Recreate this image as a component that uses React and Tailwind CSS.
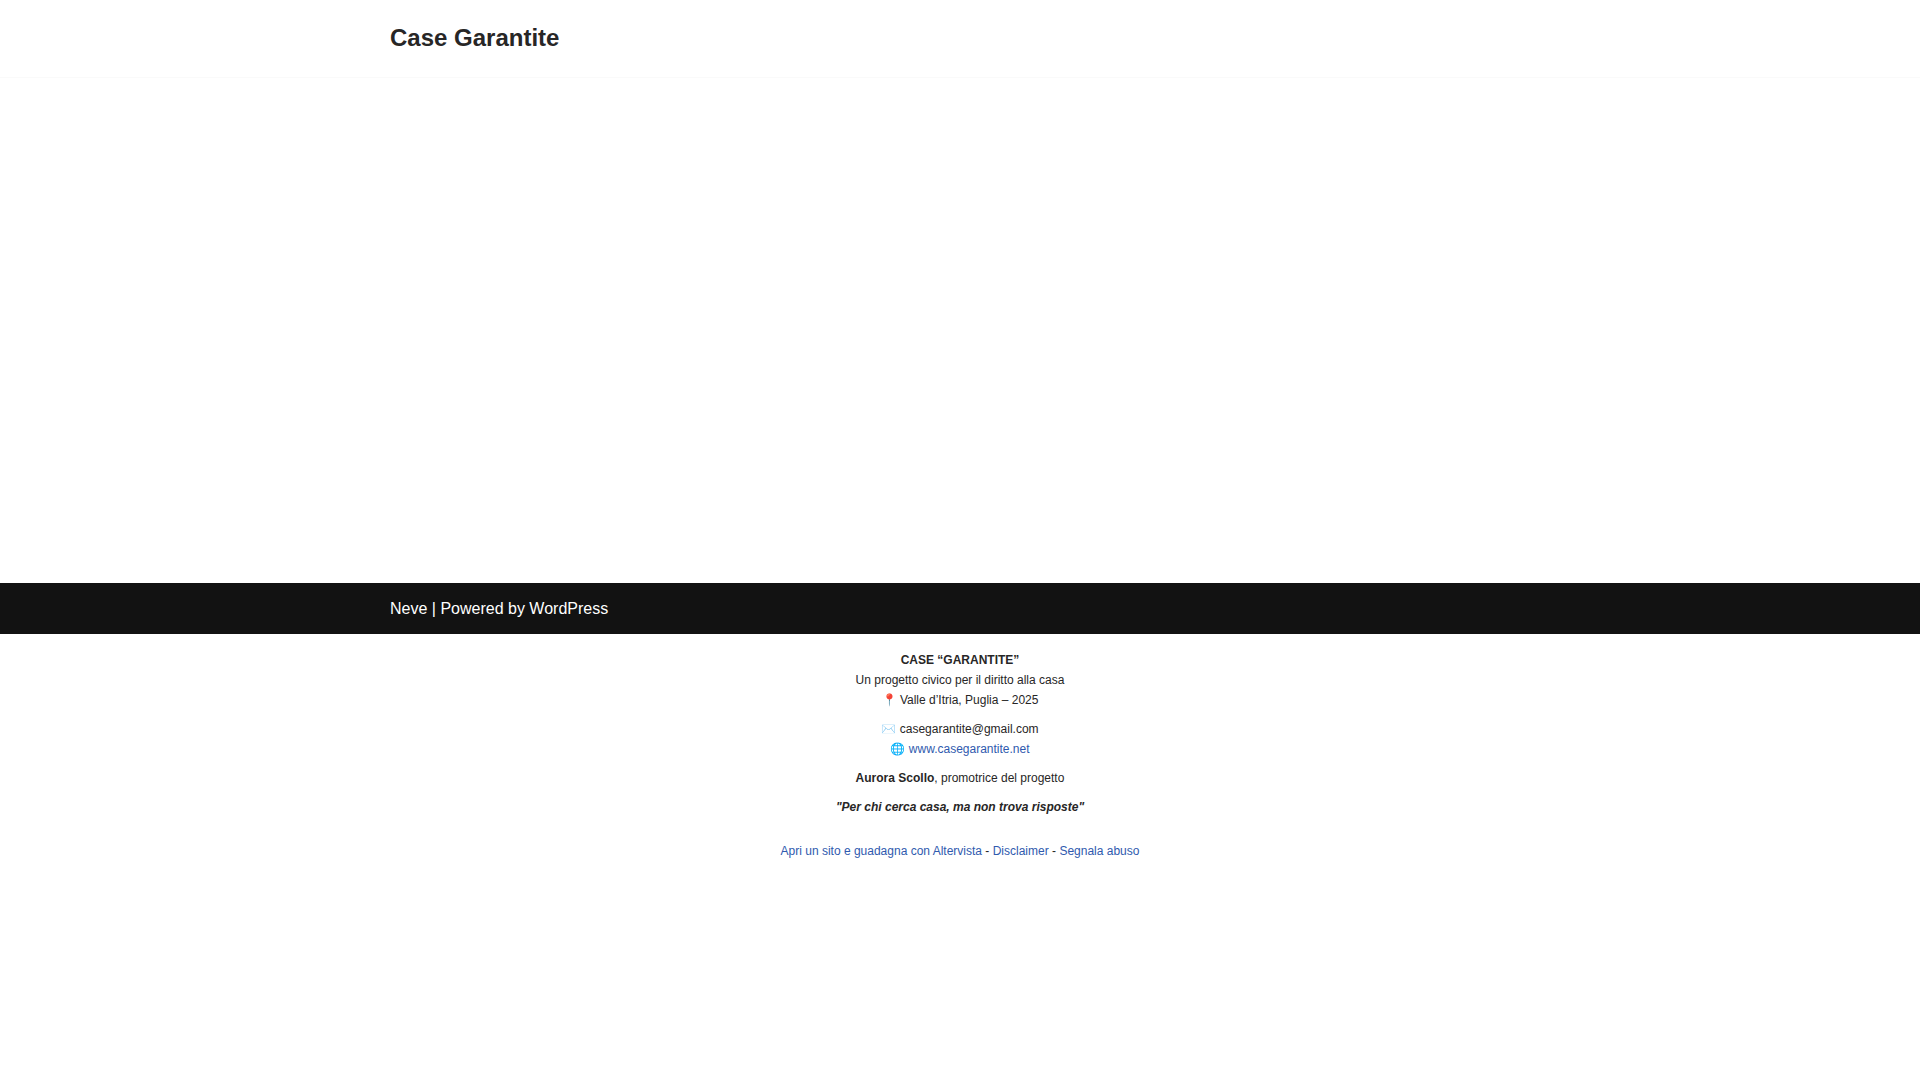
import React from 'react';

const footerLinks = [
  { label: 'Apri un sito e guadagna con Altervista', href: '#altervista' },
  { label: 'Disclaimer', href: '#disclaimer' },
  { label: 'Segnala abuso', href: '#abuso' },
];

const Header = () => (
  <header className="border-b border-[#fafafa]">
    <div className="mx-auto max-w-[1170px] px-[15px] pt-5 pb-[21px]">
      <a href="#home" className="text-2xl font-bold leading-9">
        Case Garantite
      </a>
    </div>
  </header>
);

const Credits = () => (
  <div className="bg-[#121212] text-white">
    <div className="mx-auto max-w-[1170px] px-[15px] py-3">
      <p className="text-base leading-[27px]">
        <a href="#neve">Neve</a> | Powered by <a href="#wordpress">WordPress</a>
      </p>
    </div>
  </div>
);

const ProjectInfo = () => (
  <div className="flex flex-col gap-[9px] pt-4 text-center text-xs leading-5">
    <p>
      <strong>CASE “GARANTITE”</strong>
      <br />
      Un progetto civico per il diritto alla casa
      <br />
      📍 Valle d’Itria, Puglia – 2025
    </p>
    <p>
      ✉️ casegarantite@gmail.com
      <br />
      🌐 <a href="#sito" className="text-[#2f5aae]">www.casegarantite.net</a>
    </p>
    <p>
      <strong>Aurora Scollo</strong>, promotrice del progetto
    </p>
    <p>
      <strong>
        <em>"Per chi cerca casa, ma non trova risposte"</em>
      </strong>
    </p>
  </div>
);

export default function App() {
  return (
    <div className="bg-white font-['Liberation_Sans',Arial,sans-serif] text-[#272626]">
      <Header />
      <main className="min-h-[505px]"></main>
      <footer>
        <Credits />
        <ProjectInfo />
        <p className="pt-6 text-center text-xs leading-5">
          {footerLinks.map((link, index) => (
            <React.Fragment key={link.label}>
              {index > 0 && ' - '}
              <a href={link.href} className="text-[#2f5aae]">{link.label}</a>
            </React.Fragment>
          ))}
        </p>
      </footer>
    </div>
  );
}
